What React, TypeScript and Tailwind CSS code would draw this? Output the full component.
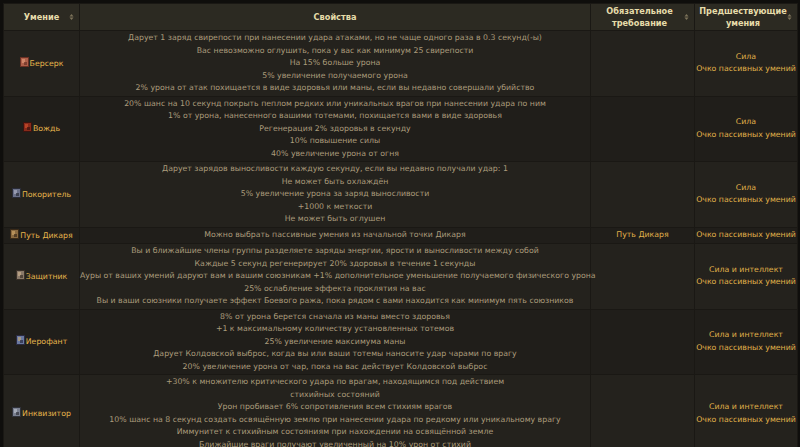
import React from 'react';

type Row = {
  name: string;
  icon: [string, string, string];
  lines: string[];
  req?: string;
  prev: string[];
};

const rows: Row[] = [
  {
    name: 'Берсерк',
    icon: ['#b0604a', '#6a3024', '#d89070'],
    lines: [
      'Дарует 1 заряд свирепости при нанесении удара атаками, но не чаще одного раза в 0.3 секунд(-ы)',
      'Вас невозможно оглушить, пока у вас как минимум 25 свирепости',
      'На 15% больше урона',
      '5% увеличение получаемого урона',
      '2% урона от атак похищается в виде здоровья или маны, если вы недавно совершали убийство',
    ],
    prev: ['Сила', 'Очко пассивных умений'],
  },
  {
    name: 'Вождь',
    icon: ['#8a2a1a', '#3a1410', '#c04a2a'],
    lines: [
      '20% шанс на 10 секунд покрыть пеплом редких или уникальных врагов при нанесении удара по ним',
      '1% от урона, нанесенного вашими тотемами, похищается вами в виде здоровья',
      'Регенерация 2% здоровья в секунду',
      '10% повышение силы',
      '40% увеличение урона от огня',
    ],
    prev: ['Сила', 'Очко пассивных умений'],
  },
  {
    name: 'Покоритель',
    icon: ['#6a7088', '#2a2c38', '#a0a4b8'],
    lines: [
      'Дарует зарядов выносливости каждую секунду, если вы недавно получали удар: 1',
      'Не может быть охлаждён',
      '5% увеличение урона за заряд выносливости',
      '+1000 к меткости',
      'Не может быть оглушен',
    ],
    prev: ['Сила', 'Очко пассивных умений'],
  },
  {
    name: 'Путь Дикаря',
    icon: ['#8a6a40', '#3a2a18', '#c09a60'],
    lines: ['Можно выбрать пассивные умения из начальной точки Дикаря'],
    req: 'Путь Дикаря',
    prev: ['Очко пассивных умений'],
  },
  {
    name: 'Защитник',
    icon: ['#8a7a6a', '#3a3028', '#c0a888'],
    lines: [
      'Вы и ближайшие члены группы разделяете заряды энергии, ярости и выносливости между собой',
      'Каждые 5 секунд регенерирует 20% здоровья в течение 1 секунды',
      'Ауры от ваших умений даруют вам и вашим союзникам +1% дополнительное уменьшение получаемого физического урона',
      '25% ослабление эффекта проклятия на вас',
      'Вы и ваши союзники получаете эффект Боевого ража, пока рядом с вами находится как минимум пять союзников',
    ],
    prev: ['Сила и интеллект', 'Очко пассивных умений'],
  },
  {
    name: 'Иерофант',
    icon: ['#6a78a0', '#2a2a40', '#b0a080'],
    lines: [
      '8% от урона берется сначала из маны вместо здоровья',
      '+1 к максимальному количеству установленных тотемов',
      '25% увеличение максимума маны',
      'Дарует Колдовской выброс, когда вы или ваши тотемы наносите удар чарами по врагу',
      '20% увеличение урона от чар, пока на вас действует Колдовской выброс',
    ],
    prev: ['Сила и интеллект', 'Очко пассивных умений'],
  },
  {
    name: 'Инквизитор',
    icon: ['#7a8090', '#30323a', '#b0b4c0'],
    lines: [
      '+30% к множителю критического удара по врагам, находящимся под действием',
      'стихийных состояний',
      'Урон пробивает 6% сопротивления всем стихиям врагов',
      '10% шанс на 8 секунд создать освящённую землю при нанесении удара по редкому или уникальному врагу',
      'Иммунитет к стихийным состояниям при нахождении на освящённой земле',
      'Ближайшие враги получают увеличенный на 10% урон от стихий',
    ],
    prev: ['Сила и интеллект', 'Очко пассивных умений'],
  },
];

const SortIcon = () => (
  <svg width="5" height="7" viewBox="0 0 5 7" className="absolute right-[5px] top-1/2 -translate-y-1/2">
    <path d="M2.5 0.5 L4.5 3 L0.5 3 Z" fill="#7d735a" />
    <path d="M0.5 4 L4.5 4 L2.5 6.5 Z" fill="#7d735a" />
  </svg>
);

const SkillIcon = ({ c }: { c: [string, string, string] }) => (
  <svg width="9" height="10" viewBox="0 0 9 10" className="inline-block align-[-1px] mr-[1px]">
    <rect x="0" y="0" width="9" height="10" fill={c[1]} />
    <rect x="1" y="1" width="7" height="8" fill={c[0]} />
    <rect x="2" y="2" width="3" height="4" fill={c[2]} opacity="0.8" />
    <rect x="4" y="5" width="3" height="3" fill={c[1]} opacity="0.7" />
  </svg>
);

export default function App() {
  return (
    <div
      className="w-[800px] h-[447px] overflow-hidden bg-[#0f0e0c] pt-[3px] pl-[3px]"
      style={{ fontFamily: '"DejaVu Sans", Verdana, sans-serif' }}
    >
      <table className="w-[794px] border-collapse table-fixed text-[7.8px] leading-[12.5px]">
        <colgroup>
          <col className="w-[76px]" />
          <col className="w-[511px]" />
          <col className="w-[104px]" />
          <col className="w-[103px]" />
        </colgroup>
        <thead>
          <tr className="bg-[#2c2a22] h-[27px] text-[#e6dcaa] font-bold text-[8.2px] leading-[12px]">
            <th className="relative border border-[#1a1814] align-middle">
              Умение
              <SortIcon />
            </th>
            <th className="border border-[#1a1814] align-middle">Свойства</th>
            <th className="relative border border-[#1a1814] align-middle pr-[6px]">
              Обязательное
              <br />
              требование
              <SortIcon />
            </th>
            <th className="relative border border-[#1a1814] align-middle pr-[6px]">
              Предшествующие
              <br />
              умения
              <SortIcon />
            </th>
          </tr>
        </thead>
        <tbody>
          {rows.map((r, i) => (
            <tr key={r.name} className={i % 2 === 0 ? 'bg-[#24221d]' : 'bg-[#201e1a]'}>
              <td className="border border-[#1a1814] text-center align-middle py-[1px] whitespace-nowrap text-[#e8b64c]">
                <SkillIcon c={r.icon} />
                {r.name}
              </td>
              <td className="border border-[#1a1814] text-center align-middle py-[1px] text-[#ab9c7c]">
                {r.lines.map((l) => (
                  <div key={l} className="whitespace-nowrap">
                    {l}
                  </div>
                ))}
              </td>
              <td className="border border-[#1a1814] text-center align-middle py-[1px] text-[#e0b24a]">
                {r.req ?? ''}
              </td>
              <td className="border border-[#1a1814] text-center align-middle py-[1px] text-[#e0b24a]">
                {r.prev.map((p) => (
                  <div key={p} className="whitespace-nowrap">
                    {p}
                  </div>
                ))}
              </td>
            </tr>
          ))}
        </tbody>
      </table>
    </div>
  );
}
